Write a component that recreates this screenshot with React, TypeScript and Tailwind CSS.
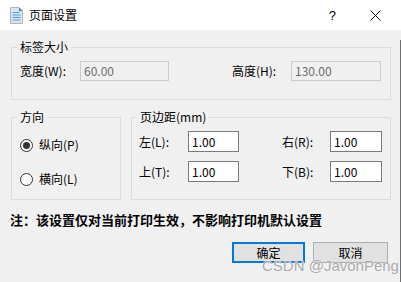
import React from "react";

const font = { fontFamily: '"Noto Sans CJK SC", "Noto Sans", sans-serif' };

function Field({ value, disabled, w }: { value: string; disabled?: boolean; w: string }) {
  return (
    <div
      className={
        "h-full flex items-center pl-[3px] border text-[12px] leading-none " +
        w +
        (disabled ? " border-[#cccccc] bg-[#f0f0f0] text-[#6d6d6d]" : " border-[#7a7a7a] bg-white text-black")
      }
    >
      {value}
    </div>
  );
}

function Radio({ checked, label }: { checked?: boolean; label: string }) {
  return (
    <div className="flex items-center h-[14px]">
      <div className="w-[13px] h-[13px] rounded-full border border-[#333333] bg-white flex items-center justify-center">
        {checked && <div className="w-[7px] h-[7px] rounded-full bg-[#333333]" />}
      </div>
      <span className="ml-[6px] text-[12px] leading-none text-black">{label}</span>
    </div>
  );
}

export default function App() {
  return (
    <div className="w-[401px] h-[282px] bg-[#f0f0f0] relative overflow-hidden text-black" style={font}>
      {/* title bar */}
      <div className="h-[30px] bg-white flex items-center">
        <svg className="ml-[10px]" width="13" height="17" viewBox="0 0 13 17">
          <path d="M0.5 0.5 H9 L12.5 4 V16.5 H0.5 Z" fill="#d7e6f5" stroke="#b5b5b5" />
          <path d="M9 0.5 L12.5 4 H9 Z" fill="#2f7fd0" />
          <rect x="2.5" y="5" width="7" height="1" fill="#5b9bd5" />
          <rect x="2.5" y="7.5" width="8" height="1" fill="#5b9bd5" />
          <rect x="2.5" y="10" width="8" height="1" fill="#5b9bd5" />
          <rect x="2.5" y="12.5" width="8" height="1" fill="#5b9bd5" />
        </svg>
        <span className="ml-[6px] text-[12px] leading-none">页面设置</span>
        <span className="ml-auto text-[13px] leading-none" style={{ fontFamily: '"Liberation Sans", sans-serif' }}>?</span>
        <svg className="ml-[34px] mr-[20px]" width="11" height="11" viewBox="0 0 11 11">
          <path d="M0.5 0.5 L10.5 10.5 M10.5 0.5 L0.5 10.5" stroke="#000" strokeWidth="1" />
        </svg>
      </div>

      <div className="h-[252px] border-r border-[#6f6f6f] pl-[11px] pr-[9px]">
        {/* group 1 */}
        <fieldset className="mt-[10px] border border-[#dcdcdc]">
          <legend className="ml-[5px] px-[3px] text-[12px] leading-[14px]">标签大小</legend>
          <div className="mt-[7px] mb-[18px] h-[20px] flex items-center pl-[8px] pr-[9px]">
            <span className="w-[60px] text-[12px] leading-none">宽度(W):</span>
            <Field value="60.00" disabled w="w-[89px]" />
            <span className="ml-auto w-[59px] text-[12px] leading-none">高度(H):</span>
            <Field value="130.00" disabled w="w-[90px]" />
          </div>
        </fieldset>

        <div className="mt-[10px] flex gap-[10px]">
          <fieldset className="w-[110px] border border-[#dcdcdc]">
            <legend className="ml-[5px] px-[3px] text-[12px] leading-[14px]">方向</legend>
            <div className="pl-[8px] mt-[14px] flex flex-col gap-[20px]">
              <Radio checked label="纵向(P)" />
              <Radio label="横向(L)" />
            </div>
          </fieldset>
          <fieldset className="flex-1 border border-[#dcdcdc]">
            <legend className="ml-[5px] px-[3px] text-[12px] leading-[14px]">页边距(mm)</legend>
            <div className="mt-[7px] mb-[17px] pl-[7px] pr-[8px] flex flex-col gap-[9px]">
              <div className="h-[21px] flex items-center">
                <span className="w-[49px] text-[12px] leading-none">左(L):</span>
                <Field value="1.00" w="w-[51px]" />
                <span className="ml-auto w-[48px] text-[12px] leading-none">右(R):</span>
                <Field value="1.00" w="w-[52px]" />
              </div>
              <div className="h-[21px] flex items-center">
                <span className="w-[49px] text-[12px] leading-none">上(T):</span>
                <Field value="1.00" w="w-[51px]" />
                <span className="ml-auto w-[48px] text-[12px] leading-none">下(B):</span>
                <Field value="1.00" w="w-[52px]" />
              </div>
            </div>
          </fieldset>
        </div>

        <div className="mt-[10px] -ml-[1px] h-[18px] flex items-center text-[13px] font-bold leading-none">
          注：该设置仅对当前打印生效，不影响打印机默认设置
        </div>

        <div className="mt-[14px] flex justify-end gap-[8px] pr-[3px]">
          <div className="w-[73px] h-[21px] border-2 border-[#0078d7] bg-[#e1e1e1] flex items-center justify-center text-[12px] leading-none">
            确定
          </div>
          <div className="w-[75px] h-[21px] border border-[#adadad] bg-[#e1e1e1] flex items-center justify-center text-[12px] leading-none">
            取消
          </div>
        </div>
      </div>

      <div
        className="absolute left-[262px] top-[258px] text-[15px] leading-none text-[#a8a8a8]"
        style={{ fontFamily: '"Liberation Sans", Arial, sans-serif', textShadow: "0 0 1px #ffffff, 0 0 1px #ffffff" }}
      >
        CSDN @JavonPeng
      </div>
    </div>
  );
}
